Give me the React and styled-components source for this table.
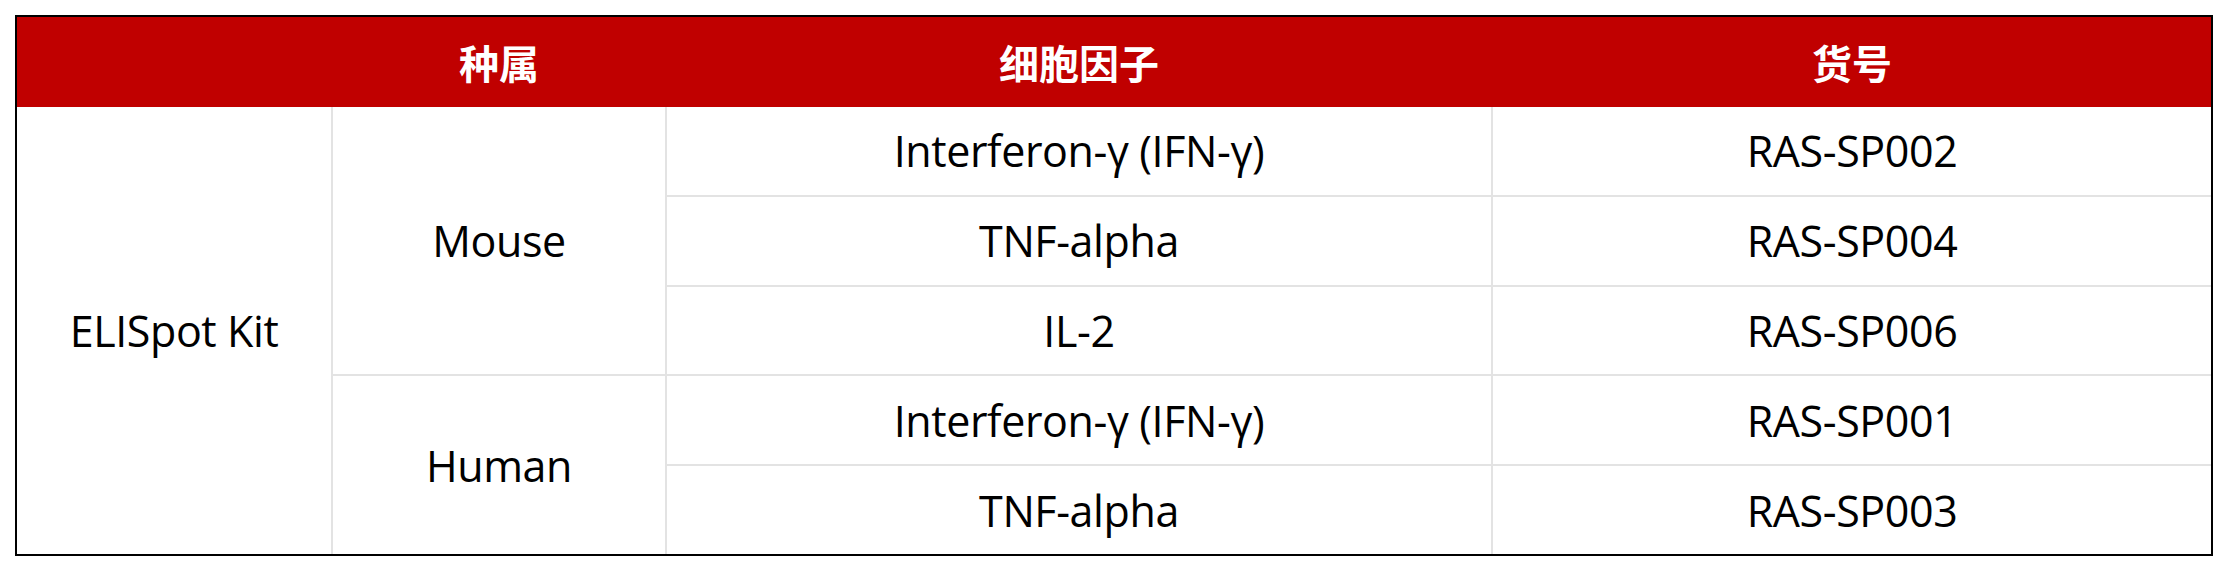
import React from "react";
import styled, { createGlobalStyle } from "styled-components";

const GlobalStyle = createGlobalStyle`
  html, body {
    margin: 0;
    padding: 0;
    background: #ffffff;
  }
  body {
    font-family: "Open Sans", "Noto Sans CJK SC", sans-serif;
  }
`;

const COLUMNS = "314px 332px 824px 1fr";

const rows = [
  { species: "Mouse", cytokine: "Interferon-γ (IFN-γ)", code: "RAS-SP002" },
  { species: "Mouse", cytokine: "TNF-alpha", code: "RAS-SP004" },
  { species: "Mouse", cytokine: "IL-2", code: "RAS-SP006" },
  { species: "Human", cytokine: "Interferon-γ (IFN-γ)", code: "RAS-SP001" },
  { species: "Human", cytokine: "TNF-alpha", code: "RAS-SP003" },
];

function App() {
  return (
    <>
      <GlobalStyle />
      <Page>
        <Table>
          <HeadRow>
            <HeadCell />
            <HeadCell>种属</HeadCell>
            <HeadCell>细胞因子</HeadCell>
            <HeadCell>货号</HeadCell>
          </HeadRow>
          <Body>
            <Cell $col="1" $row="1 / span 5">ELISpot Kit</Cell>
            <Cell $col="2" $row="1 / span 3">Mouse</Cell>
            <Cell $col="2" $row="4 / span 2">Human</Cell>
            {rows.map((r, i) => (
              <React.Fragment key={r.code}>
                <Cell $col="3" $row={`${i + 1}`}>{r.cytokine}</Cell>
                <Cell $col="4" $row={`${i + 1}`}>{r.code}</Cell>
              </React.Fragment>
            ))}
          </Body>
        </Table>
      </Page>
    </>
  );
}

const Page = styled.div`
  padding: 15px;
`;

const Table = styled.div`
  display: flex;
  flex-direction: column;
  width: 2198px;
  height: 541px;
  box-sizing: border-box;
  border: 2px solid #000000;
`;

const HeadRow = styled.div`
  display: grid;
  grid-template-columns: ${COLUMNS};
  column-gap: 2px;
  height: 90px;
  background: #c00000;
`;

const HeadCell = styled.div`
  display: flex;
  align-items: center;
  justify-content: center;
  color: #ffffff;
  font-family: "Noto Sans CJK SC", sans-serif;
  font-weight: 700;
  font-size: 40px;
  line-height: 1;
`;

const Body = styled.div`
  flex: 1;
  display: grid;
  grid-template-columns: ${COLUMNS};
  grid-template-rows: repeat(5, 1fr);
  gap: 2px;
  background: #e3e3e3;
`;

const Cell = styled.div`
  grid-column: ${(p) => p.$col};
  grid-row: ${(p) => p.$row};
  display: flex;
  align-items: center;
  justify-content: center;
  background: #ffffff;
  color: #000000;
  font-family: "Open Sans", "Noto Sans CJK SC", sans-serif;
  font-size: 43px;
  letter-spacing: -0.4px;
  line-height: 1;
`;

export default App;
